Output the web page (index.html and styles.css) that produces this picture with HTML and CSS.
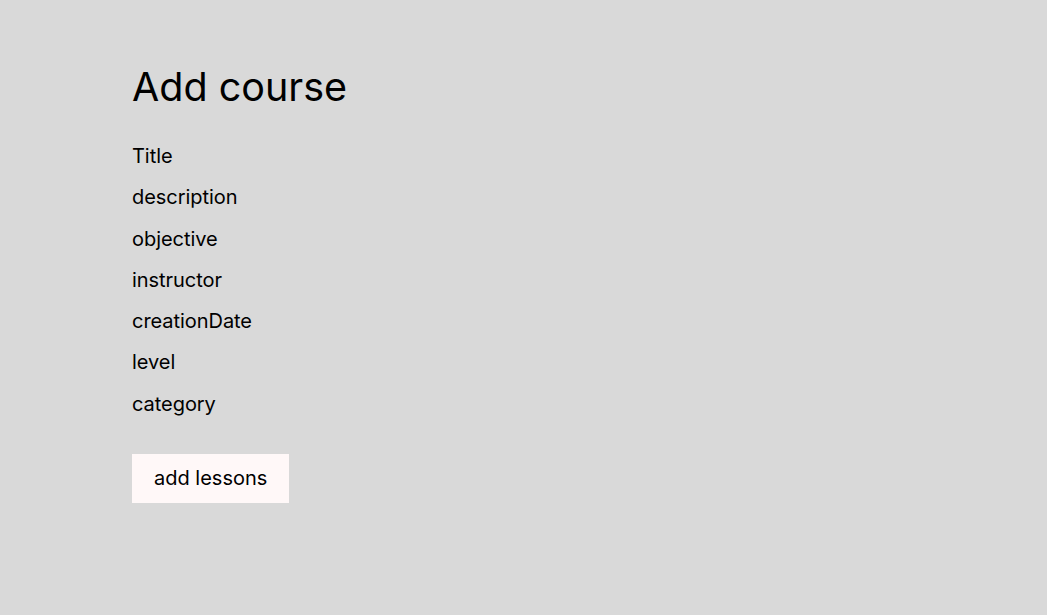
FILE: index.html
```html
<!DOCTYPE html>
<html lang="en">
<head>
<meta charset="utf-8">
<title>Add course</title>
<link rel="stylesheet" href="styles.css">
</head>
<body>
<main class="page">
  <h1 class="title">Add course</h1>
  <ul class="fields">
    <li class="field">Title</li>
    <li class="field">description</li>
    <li class="field">objective</li>
    <li class="field">instructor</li>
    <li class="field">creationDate</li>
    <li class="field">level</li>
    <li class="field">category</li>
  </ul>
  <button class="btn" type="button">add lessons</button>
</main>
</body>
</html>
```

FILE: styles.css
```css
html, body {
  margin: 0;
  padding: 0;
  background: #d9d9d9;
}
body {
  font-family: Inter, "Noto Sans", sans-serif;
  color: #000;
  min-height: 615px;
}
.page {
  display: flex;
  flex-direction: column;
  align-items: flex-start;
  padding: 63px 0 0 132px;
}
.title {
  margin: 0;
  font-size: 39.5px;
  line-height: 48px;
  font-weight: 400;
}
.fields {
  list-style: none;
  margin: 33px 0 0;
  padding: 0;
  display: flex;
  flex-direction: column;
  gap: 17.25px;
}
.field {
  font-size: 20px;
  line-height: 24px;
  letter-spacing: -0.05px;
}
.btn {
  margin-top: 38px;
  border: none;
  background: #fff8f8;
  font-family: inherit;
  font-size: 20px;
  line-height: 24px;
  color: #000;
  padding: 12.5px 22px;
  cursor: pointer;
}
```
